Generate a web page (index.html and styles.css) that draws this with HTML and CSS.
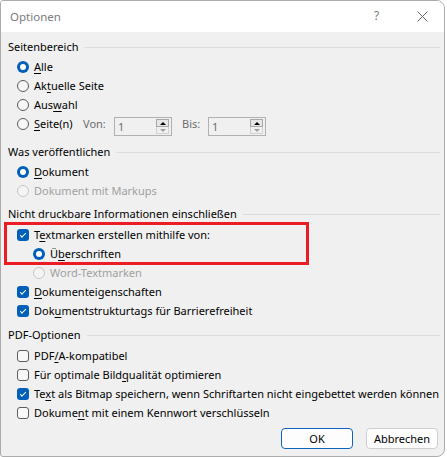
FILE: index.html
```html
<!DOCTYPE html>
<html lang="de">
<head>
<meta charset="utf-8">
<title>Optionen</title>
<link rel="stylesheet" href="styles.css">
</head>
<body>
<div class="window">
  <div class="titlebar">
    <span class="title">Optionen</span>
    <span class="help">?</span>
    <span class="close">
      <svg width="11" height="11" viewBox="0 0 11 11"><path d="M0.5 0.5 L10.5 10.5 M10.5 0.5 L0.5 10.5" stroke="#6a6a6a" stroke-width="1" fill="none"/></svg>
    </span>
  </div>
  <div class="content">
    <div class="group-head g-first"><span>Seitenbereich</span><i class="rule"></i></div>
    <div class="opt"><span class="radio checked"></span><span class="label"><u>A</u>lle</span></div>
    <div class="opt"><span class="radio"></span><span class="label">Ak<u>t</u>uelle Seite</span></div>
    <div class="opt"><span class="radio"></span><span class="label">Aus<u>w</u>ahl</span></div>
    <div class="opt opt-range">
      <span class="radio"></span><span class="label label-seite"><u>S</u>eite(n)</span>
      <span class="range-label">Von:</span>
      <span class="spin"><span class="spin-val">1</span><span class="spin-btns"><span class="sb up"></span><span class="sb down"></span></span></span>
      <span class="range-label bis">Bis:</span>
      <span class="spin"><span class="spin-val">1</span><span class="spin-btns"><span class="sb up"></span><span class="sb down"></span></span></span>
    </div>

    <div class="group-head g-2"><span>Was veröffentlichen</span><i class="rule"></i></div>
    <div class="opt"><span class="radio checked"></span><span class="label"><u>D</u>okument</span></div>
    <div class="opt disabled"><span class="radio"></span><span class="label">Dokument mit Markups</span></div>

    <div class="group-head g-3"><span>Nicht druckbare Informationen einschließen</span><i class="rule"></i></div>
    <div class="opt opt-first3"><span class="check checked"></span><span class="label">T<u>e</u>xtmarken erstellen mithilfe von:</span></div>
    <div class="opt sub"><span class="radio checked"></span><span class="label">Ü<u>b</u>erschriften</span></div>
    <div class="opt sub disabled"><span class="radio"></span><span class="label">Word-Textmarken</span></div>
    <div class="opt"><span class="check checked"></span><span class="label"><u>D</u>okumenteigenschaften</span></div>
    <div class="opt"><span class="check checked"></span><span class="label">Dok<u>u</u>mentstrukturtags für Barrierefreiheit</span></div>

    <div class="group-head g-4"><span>PDF-Optionen</span><i class="rule"></i></div>
    <div class="opt opt-first4"><span class="check"></span><span class="label">PDF<u>/</u>A-kompatibel</span></div>
    <div class="opt"><span class="check"></span><span class="label">Für optimale Bild<u>q</u>ualität optimieren</span></div>
    <div class="opt"><span class="check checked"></span><span class="label">Te<u>x</u>t als Bitmap speichern, wenn Schriftarten nicht eingebettet werden können</span></div>
    <div class="opt"><span class="check"></span><span class="label">Dokume<u>n</u>t mit einem Kennwort verschlüsseln</span></div>

    <div class="buttons">
      <button class="btn btn-default">OK</button>
      <button class="btn">Abbrechen</button>
    </div>
  </div>
  <div class="highlight"></div>
</div>
</body>
</html>
```

FILE: styles.css
```css
html, body {
  margin: 0;
  padding: 0;
  background: #ffffff;
}

body {
  font-family: "Noto Sans", "Open Sans", sans-serif;
  font-size: 11px;
  color: #000;
  width: 447px;
  height: 457px;
  overflow: hidden;
}

.window {
  position: relative;
  box-sizing: border-box;
  width: 445px;
  height: 457px;
  border: 1px solid #acacac;
  border-radius: 3px 8px 8px 3px;
  background: #f0f0f0;
  overflow: hidden;
}

.titlebar {
  height: 31px;
  background: #ffffff;
  display: flex;
  align-items: center;
  padding-left: 9px;
}

.title {
  color: #7b7b7b;
  font-size: 11.5px;
  flex: 1;
  margin-top: -1px;
}

.help {
  color: #7b7b7b;
  font-size: 12px;
  width: 12px;
  margin-right: 31px;
  margin-top: -2px;
}

.close {
  display: flex;
  width: 11px;
  height: 11px;
  margin-right: 16px;
  margin-top: -1px;
}

.content {
  display: flex;
  flex-direction: column;
  padding: 0 4px 0 7px;
}

.group-head {
  display: flex;
  align-items: center;
  height: 19px;
  line-height: 19px;
  margin-bottom: 1px;
  white-space: nowrap;
}

.group-head .rule {
  flex: 1;
  height: 1px;
  background: #dcdcdc;
  margin-left: 6px;
  margin-top: 1px;
}

.g-first { margin-top: 5px; }
.g-2 { margin-top: 9px; }
.g-3 { margin-top: 4px; }
.g-4 { margin-top: 5px; }
.opt-first3 { margin-top: 1px; }
.opt-first4 { margin-top: 1px; }

.opt {
  display: flex;
  align-items: center;
  height: 19px;
  line-height: 19px;
  padding-left: 9px;
  white-space: nowrap;
}

.opt.sub {
  padding-left: 25px;
}

.label u {
  text-underline-offset: 2px;
  text-decoration-thickness: 1px;
}

.radio, .check {
  box-sizing: border-box;
  width: 12px;
  height: 12px;
  flex: none;
  margin-right: 5px;
  margin-top: 1px;
  position: relative;
}

.radio {
  border-radius: 50%;
  border: 1px solid #5c5c5c;
  background: #f7f7f7;
}

.radio.checked {
  border: none;
  background: #005fb8;
}

.radio.checked::after {
  content: "";
  position: absolute;
  left: 3px;
  top: 3px;
  width: 6px;
  height: 6px;
  border-radius: 50%;
  background: #ffffff;
}

.check {
  border-radius: 3px;
  border: 1px solid #5c5c5c;
  background: #f9f9f9;
}

.check.checked {
  border: none;
  background: #005fb8;
}

.check.checked::after {
  content: "";
  position: absolute;
  left: 3px;
  top: 4px;
  width: 5px;
  height: 2px;
  border-left: 1px solid #ffffff;
  border-bottom: 1px solid #ffffff;
  transform: rotate(-45deg);
}

.disabled .label {
  color: #a0a0a0;
}

.disabled .radio {
  border-color: #c6c6c6;
  background: #f4f4f4;
}

.label-seite {
  width: 49px;
}

.range-label {
  color: #6d6d6d;
  width: 31px;
}

.range-label.bis {
  width: 26px;
  margin-left: 10px;
}

.spin {
  box-sizing: border-box;
  width: 58px;
  height: 19px;
  border: 1px solid #b1b1b1;
  background: #f0f0f0;
  display: flex;
  align-items: center;
  align-self: flex-start;
  margin-top: 3px;
}

.spin-val {
  color: #6d6d6d;
  flex: 1;
  padding-left: 3px;
  line-height: 17px;
}

.spin-btns {
  display: flex;
  flex-direction: column;
  width: 13px;
  height: 15px;
  margin-right: 2px;
}

.sb {
  flex: 1;
  box-sizing: border-box;
  position: relative;
}

.sb.up {
  border: 1px solid #a8a8a8;
  background: #e6e6e6;
}

.sb.down {
  border: 1px solid #d2d2d2;
  border-top: none;
  background: #f0f0f0;
}

.sb.up::after,
.sb.down::after {
  content: "";
  position: absolute;
  left: 3px;
  width: 0;
  height: 0;
  border-left: 3px solid transparent;
  border-right: 3px solid transparent;
}

.sb.up::after {
  top: 2px;
  border-bottom: 3px solid #000;
}

.sb.down::after {
  top: 2px;
  border-top: 3px solid #a0a0a0;
}

.buttons {
  display: flex;
  justify-content: flex-end;
  gap: 13px;
  margin-top: 6px;
  padding-right: 2px;
}

.btn {
  box-sizing: border-box;
  width: 72px;
  height: 21px;
  font-family: inherit;
  font-size: 11px;
  color: #000;
  background: #fdfdfd;
  border: 1px solid #cfcfcf;
  border-radius: 4px;
  padding: 0;
  line-height: 19px;
}

.btn-default {
  border: 1px solid #0f62be;
  box-shadow: inset 0 0 0 1px #ffffff;
}

.highlight {
  position: absolute;
  left: 3px;
  top: 221px;
  width: 305px;
  height: 43px;
  box-sizing: border-box;
  border: 3.5px solid #ec1c24;
}
```
